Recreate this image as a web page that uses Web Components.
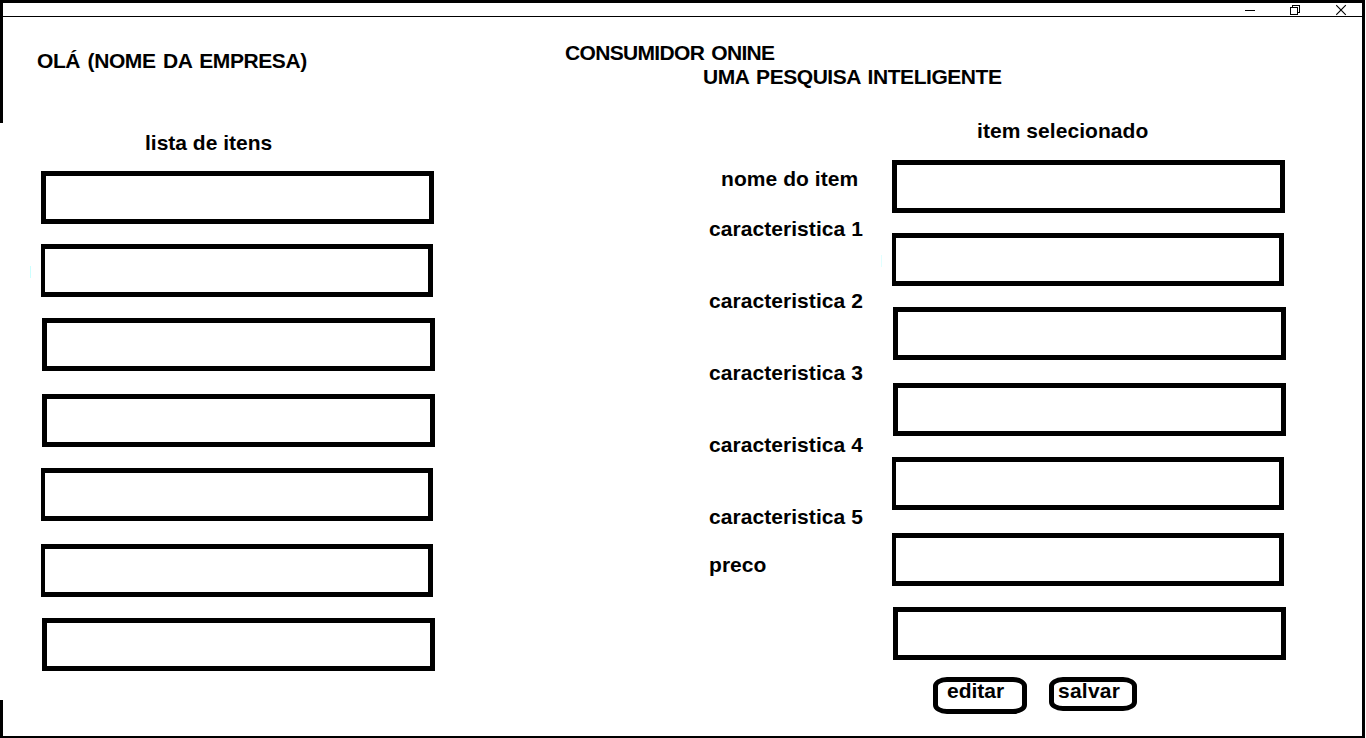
<!DOCTYPE html>
<html lang="pt">
<head>
<meta charset="utf-8">
<title>Consumidor Onine</title>
<style>
html,body{margin:0;height:100%;background:#fff}
body{font:bold 21px/24px "Liberation Sans",Arial,sans-serif;color:#000;overflow:hidden}
</style>
</head>
<body>
<consumer-app></consumer-app>
<script>
const define = (name, html) => customElements.define(name, class extends HTMLElement {
  constructor() {
    super();
    const t = document.createElement('template');
    t.innerHTML = html;
    this.attachShadow({mode: 'open'}).append(t.content.cloneNode(true));
  }
});

define('text-label', `
<style>:host{display:block;white-space:nowrap;height:24px;letter-spacing:var(--track,.06px);word-spacing:var(--gap,0)}</style>
<slot></slot>`);

define('title-bar', `
<style>
:host{display:flex;justify-content:flex-end;height:13px;border-bottom:1px solid #000;padding-right:15px}
svg{display:block;width:11px;height:13px;margin-left:35px;shape-rendering:crispEdges}
</style>
<svg viewBox="0 0 11 13"><path d="M1 7.5H11" stroke="#000"/></svg>
<svg viewBox="0 0 11 13" fill="none" stroke="#000"><path d="M.5 4.5h7v7h-7zM2.5 4V2.5h7v7H8"/></svg>
<svg viewBox="0 0 11 13" style="shape-rendering:auto"><path d="M.2 2.2l9.6 9.6M9.8 2.2l-9.6 9.6" stroke="#000" stroke-width="1.1"/></svg>`);

define('outline-box', `
<style>
:host{display:block;box-sizing:border-box;width:393px;height:53px;border:5px solid #000}
:host([narrow]){width:392px;border-left-width:4px}
:host([shift]){margin-left:1px}
</style>`);

define('box-stack', `
<style>
:host{display:grid;grid-template-rows:73px 74px 76px 74px 76px 74px 53px;width:394px}
</style>
<outline-box></outline-box>
<outline-box narrow></outline-box>
<outline-box shift></outline-box>
<outline-box shift></outline-box>
<outline-box narrow></outline-box>
<outline-box narrow></outline-box>
<outline-box shift></outline-box>`);

define('round-button', `
<style>
:host{display:block;box-sizing:border-box;border:5px solid #000;border-radius:14px / 9px;width:94px;height:37px;padding-left:9px}
:host([small]){width:88px;height:34px;padding-left:4px}
text-label{margin-top:-3px;--track:0}
:host([small]) text-label{--track:.25px}
</style>
<text-label><slot></slot></text-label>`);

define('page-header', `
<style>
:host{display:flex;height:84px}
.hello{width:528px;padding:32px 0 0 34px}
.hello text-label{--track:-.4px}
.brand{padding-top:24px}
text-label{--track:-.67px;--gap:2px}
.tag{margin-left:138px;--track:-.45px}
</style>
<div class="hello"><text-label>OLÁ (NOME DA EMPRESA)</text-label></div>
<div class="brand"><text-label>CONSUMIDOR ONINE</text-label><text-label class="tag">UMA PESQUISA INTELIGENTE</text-label></div>`);

define('item-list', `
<style>
:host{display:block;position:relative;width:668px;padding:30px 0 0 38px;box-sizing:border-box}
text-label{margin:0 0 16px 104px;--track:0}
i{position:absolute;left:27px;top:165px;width:1px;height:12px;background:#ccffff}
</style>
<text-label>lista de itens</text-label>
<box-stack></box-stack><i></i>`);

define('item-detail', `
<style>
:host{display:flex;position:relative;padding-left:38px}
.labels{width:183px;padding-top:66px;display:grid;grid-template-rows:50px 72px 72px 72px 72px 48px 24px;align-content:start}
.name{margin-left:12px}
.heading{margin:18px 0 17px 85px}
.actions{display:flex;gap:22px;margin:17px 0 0 41px;align-items:flex-start}
i{position:absolute;left:210px;top:154px;width:1px;height:12px;background:#e0ffff}
</style>
<div class="labels">
<text-label class="name">nome do item</text-label>
<text-label>caracteristica 1</text-label>
<text-label>caracteristica 2</text-label>
<text-label>caracteristica 3</text-label>
<text-label>caracteristica 4</text-label>
<text-label>caracteristica 5</text-label>
<text-label>preco</text-label>
</div>
<div>
<text-label class="heading">item selecionado</text-label>
<box-stack></box-stack>
<div class="actions"><round-button>editar</round-button><round-button small>salvar</round-button></div>
</div><i></i>`);

define('consumer-app', `
<style>
:host{display:flex;box-sizing:border-box;width:1365px;height:738px;border:solid #000;border-width:3px 3px 2px 0;overflow:hidden}
.edge{width:3px;flex:none;background:linear-gradient(#000 120px,transparent 120px 697px,#000 697px)}
.page{flex:1;min-width:0}
.main{display:flex}
</style>
<div class="edge"></div>
<div class="page">
<title-bar></title-bar>
<page-header></page-header>
<div class="main"><item-list></item-list><item-detail></item-detail></div>
</div>`);
</script>
</body>
</html>
